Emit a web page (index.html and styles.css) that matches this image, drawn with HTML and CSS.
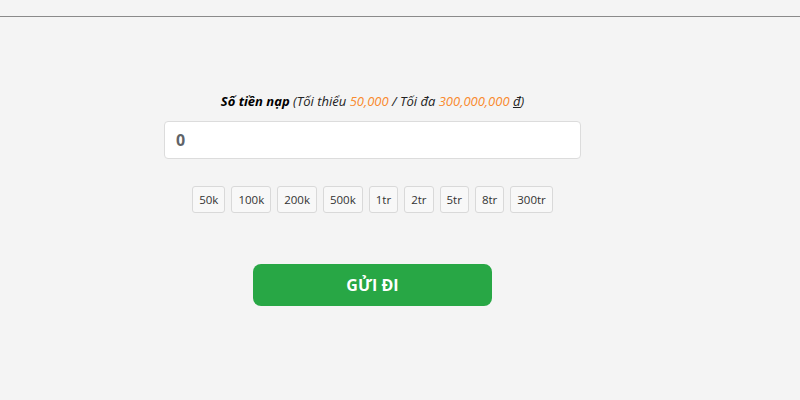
FILE: index.html
```html
<!DOCTYPE html>
<html lang="vi">
<head>
<meta charset="utf-8">
<title>Nạp tiền</title>
<link rel="stylesheet" href="styles.css">
</head>
<body>
<div class="topbar"></div>
<main class="main">
  <div class="label"><b>Số tiền nạp</b> (Tối thiểu <span class="hl">50,000</span> / Tối đa <span class="hl">300,000,000</span> <u>đ</u>)</div>
  <input class="amount" type="text" value="0">
  <div class="chips">
    <button class="chip">50k</button>
    <button class="chip">100k</button>
    <button class="chip">200k</button>
    <button class="chip">500k</button>
    <button class="chip">1tr</button>
    <button class="chip">2tr</button>
    <button class="chip">5tr</button>
    <button class="chip">8tr</button>
    <button class="chip">300tr</button>
  </div>
  <button class="submit">GỬI ĐI</button>
</main>
</body>
</html>
```
FILE: styles.css
```css
html, body {
  margin: 0;
  padding: 0;
  background: #f4f4f4;
  font-family: "Open Sans", "Noto Sans", sans-serif;
  color: #222;
}
.topbar {
  height: 16px;
  border-bottom: 1px solid #8a8a8a;
}
.main {
  width: 745px;
  display: flex;
  flex-direction: column;
  align-items: center;
  padding-top: 75px;
}
.label {
  font-size: 13px;
  line-height: 19px;
  font-style: italic;
  color: #222;
}
.label b {
  color: #000;
}
.hl {
  color: #f98a2e;
}
.amount {
  margin-top: 10px;
  box-sizing: border-box;
  width: 417px;
  height: 38px;
  border: 1px solid #dcdcdc;
  border-radius: 4px;
  background: #fff;
  padding: 0 11px;
  font-family: "Open Sans", sans-serif;
  font-size: 16px;
  font-weight: 700;
  color: #5f6368;
  outline: none;
}
.chips {
  margin-top: 27px;
  display: flex;
  gap: 6px;
}
.chip {
  box-sizing: border-box;
  height: 27px;
  padding: 0 6px;
  border: 1px solid #d9d9d9;
  border-radius: 3px;
  background: #f8f8f8;
  font-family: "Open Sans", sans-serif;
  font-size: 11.5px;
  color: #333;
}
.submit {
  margin-top: 51px;
  width: 239px;
  height: 42px;
  border: none;
  border-radius: 8px;
  background: #28a745;
  color: #fff;
  font-family: "Open Sans", sans-serif;
  font-size: 16px;
  font-weight: 700;
}
```
